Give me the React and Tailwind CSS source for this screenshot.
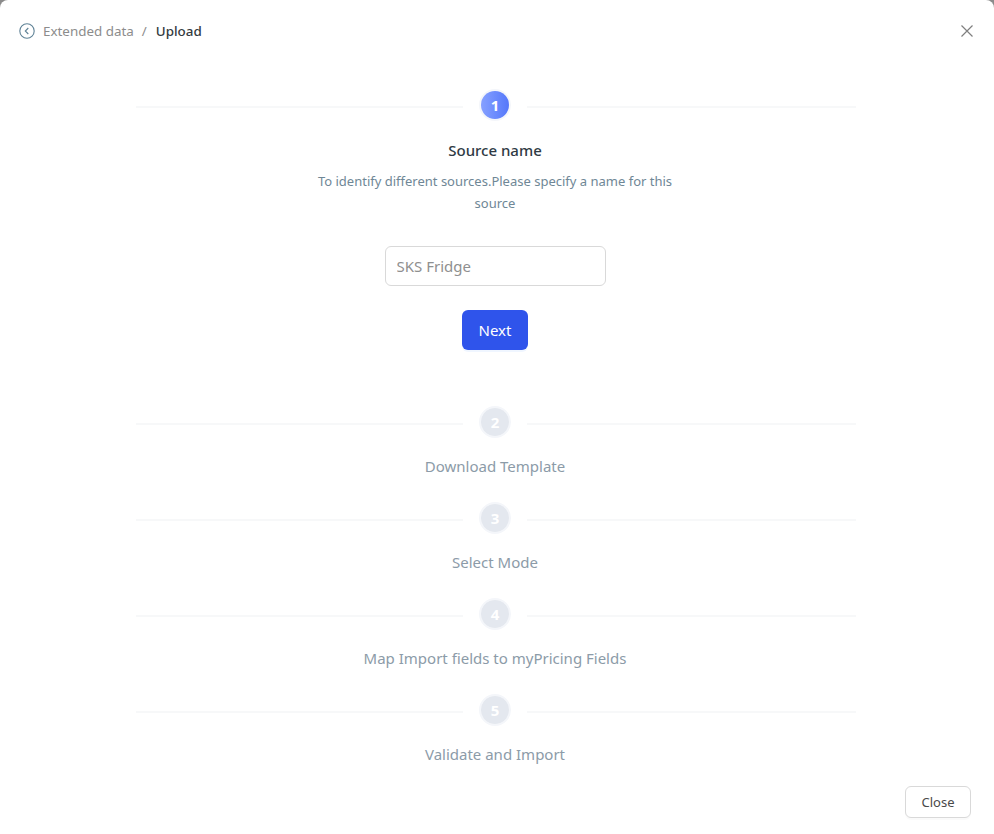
import React from "react";

const font = { fontFamily: '"Noto Sans", "Open Sans", sans-serif' };

function StepHead({ n, active }) {
  const lineY = active ? "mt-[4px]" : "mt-[3px]";
  return (
    <div className="flex items-center h-[32px] w-[720px] ml-[2px]">
      <div className={"w-[327px] h-[2px] bg-[#f7f8f9] " + lineY} />
      <div className="mx-[16px] w-[32px] h-[32px] shrink-0 rounded-full flex items-center justify-center border-2 border-[#f4f6fa]">
        <div className={"w-[28px] h-[28px] rounded-full flex items-center justify-center text-white text-[15px] font-bold " + (active ? "bg-gradient-to-r from-[#86a0ff] to-[#5577fa]" : "bg-[#e4e8ef]")}>{n}</div>
      </div>
      <div className={"w-[329px] h-[2px] bg-[#f7f8f9] " + lineY} />
    </div>
  );
}

function Pending({ n, title }) {
  return (
    <div className="flex flex-col items-center h-[96px]">
      <StepHead n={n} />
      <div className="mt-[17px] text-[15px] leading-[22px] text-[#8c9ba8]">{title}</div>
    </div>
  );
}

export default function App() {
  return (
    <div style={font} className="relative w-[994px] h-[834px] bg-[#8b8b8b] overflow-hidden">
      <div className="absolute inset-0 bg-white rounded-t-[8px] flex flex-col">
        <div className="h-[62px] flex items-center pl-[19px] pr-[19px] shrink-0">
          <svg width="16" height="16" viewBox="0 0 16 16" fill="none" className="mr-[8px]">
            <circle cx="8" cy="8" r="7.2" stroke="#5f8296" strokeWidth="1.1" />
            <path d="M9.3 5 L6.3 8 L9.3 11" stroke="#5f8296" strokeWidth="1.1" />
          </svg>
          <span className="text-[13.4px] mt-[1px] text-[#8c8c8c]">Extended data</span>
          <span className="text-[13.4px] mt-[1px] text-[#8c8c8c] ml-[8px] mr-[9px]">/</span>
          <span className="text-[13.4px] mt-[1px] text-[#333a40] font-medium">Upload</span>
          <svg width="14" height="14" viewBox="0 0 14 14" fill="none" className="ml-auto mr-[1px]">
            <path d="M1.5 1.5 L12.5 12.5 M12.5 1.5 L1.5 12.5" stroke="#7f7f7f" strokeWidth="1.2" />
          </svg>
        </div>
        <div className="w-[990px] flex flex-col items-center mt-[27px]">
          <StepHead n="1" active />
          <div className="mt-[18px] text-[15px] leading-[22px] font-medium text-[#2f3a44]">Source name</div>
          <div className="mt-[9px] w-[370px] text-center text-[13px] leading-[22px] text-[#6f8796]">
            To identify different sources.Please specify a name for this source
          </div>
          <input
            readOnly
            placeholder="SKS Fridge"
            className="mt-[32px] w-[221px] h-[40px] border border-[#d9d9d9] rounded-[6px] pl-[11px] pr-[10px] text-[15px] outline-none placeholder:text-[#8f8f8f]"
          />
          <button className="mt-[24px] w-[66px] h-[40px] bg-[#2f54eb] text-white text-[15px] rounded-[6px] shadow-[0_2px_0_rgba(5,95,255,0.06)]">Next</button>
          <div className="mt-[56px] flex flex-col items-center">
            <Pending n="2" title="Download Template" />
            <Pending n="3" title="Select Mode" />
            <Pending n="4" title="Map Import fields to myPricing Fields" />
            <Pending n="5" title="Validate and Import" />
          </div>
        </div>
        <div className="absolute right-[23px] bottom-[16px]">
          <button className="w-[66px] h-[32px] pt-[1px] border border-[#d9d9d9] rounded-[6px] bg-white text-[13px] text-[#4a4a4a] shadow-[0_2px_0_rgba(0,0,0,0.02)]">Close</button>
        </div>
      </div>
    </div>
  );
}
